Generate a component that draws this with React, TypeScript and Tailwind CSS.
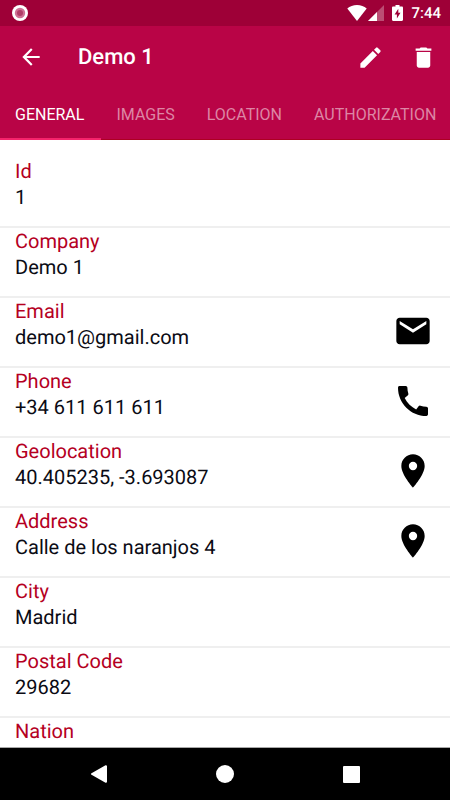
import React, { useState } from 'react'
import type { IconType } from 'react-icons'
import { MdArrowBack, MdCall, MdDelete, MdEdit, MdEmail, MdLocationOn } from 'react-icons/md'

type Field = {
  label: string;
  value?: string;
  icon?: IconType;
  action?: string;
  href?: string;
}

const tabs = ['GENERAL', 'IMAGES', 'LOCATION', 'AUTHORIZATION'];

const fields: Field[] = [
  { label: 'Id', value: '1' },
  { label: 'Company', value: 'Demo 1' },
  { label: 'Email', value: 'demo1@gmail.com', icon: MdEmail, action: 'Send email', href: 'mailto:demo1@gmail.com' },
  { label: 'Phone', value: '+34 611 611 611', icon: MdCall, action: 'Call', href: 'tel:+34611611611' },
  { label: 'Geolocation', value: '40.405235, -3.693087', icon: MdLocationOn, action: 'Open coordinates', href: 'geo:40.405235,-3.693087' },
  { label: 'Address', value: 'Calle de los naranjos 4', icon: MdLocationOn, action: 'Open address', href: 'geo:0,0?q=Calle+de+los+naranjos+4' },
  { label: 'City', value: 'Madrid' },
  { label: 'Postal Code', value: '29682' },
  { label: 'Nation' },
];

function StatusBar() {
  return (
    <div className="flex h-[26px] shrink-0 items-center bg-[#9e0037] pl-3 pr-[9px] text-white">
      <svg className="size-4" viewBox="0 0 16 16">
        <circle cx="8" cy="8" r="8" fill="#fff" />
        <circle cx="8" cy="8" r="5.2" fill="#cf7095" />
        <circle cx="8" cy="8" r="3" fill="#b03d68" />
      </svg>
      <div className="ml-auto flex items-center">
        {/* wifi */}
        <svg className="h-4 w-5" viewBox="0 0 20 16" fill="#fff">
          <path d="M10 16 0.3 3.6C2.8 1.3 6.2 0 10 0s7.2 1.3 9.7 3.6z" />
        </svg>
        {/* mobile signal */}
        <svg className="ml-px h-4 w-4" viewBox="0 0 16 16" fill="#fff">
          <path d="M0 16 16 0v16z" opacity="0.3" />
          <path d="M0 16 9 7v9z" />
        </svg>
        {/* charging battery */}
        <svg className="ml-2 h-4 w-[11px]" viewBox="0 0 11 16">
          <path d="M3.5 0h4v1.5h2.3c.7 0 1.2.5 1.2 1.2v12.1c0 .7-.5 1.2-1.2 1.2H1.2C.5 16 0 15.5 0 14.8V2.7c0-.7.5-1.2 1.2-1.2h2.3z" fill="#fff" />
          <path d="M6.3 3.8 2.6 9.4h2.3v4l3.6-5.7H6.3z" fill="#9e0037" />
        </svg>
        <span className="ml-2 text-[15px] leading-5 font-medium">7:44</span>
      </div>
    </div>
  )
}

function FieldRow({ field }: { field: Field }) {
  const Icon = field.icon;

  return (
    <div className="flex h-[70px] items-start justify-between border-b-2 border-[#efefef] pl-[15px] pr-[17px]">
      <dl className="text-[20px] leading-[26px]">
        <dt className="text-[#b5001f]">{field.label}</dt>
        <dd className="text-[#0b0b14]">{field.value}</dd>
      </dl>
      {Icon && (
        <a href={field.href} aria-label={field.action} className="mt-[13px] text-black">
          <Icon size={40} />
        </a>
      )}
    </div>
  )
}

function NavigationBar() {
  return (
    <nav className="grid h-[53px] shrink-0 grid-cols-3 items-center justify-items-center border-t border-[#a8a8a8] bg-black px-9">
      <button aria-label="Back">
        <svg className="size-[18px]" viewBox="0 0 18 18">
          <path d="M2 9 16 1.2v15.6z" fill="#fff" stroke="#fff" strokeWidth="2" strokeLinejoin="round" />
        </svg>
      </button>
      <button aria-label="Home" className="size-[18px] rounded-full bg-white" />
      <button aria-label="Recent apps" className="size-[17px] rounded-[1px] bg-white" />
    </nav>
  )
}

export default function App() {
  const [active, setActive] = useState('GENERAL');

  return (
    <div className="flex h-screen flex-col overflow-hidden bg-white font-[Roboto,sans-serif] [text-rendering:geometricPrecision]">
      <StatusBar />

      <header className="shrink-0 bg-[#b90446] text-white">
        <div className="flex h-[62px] items-center pl-[18px] pr-[13px]">
          <button aria-label="Go back">
            <MdArrowBack size={26} />
          </button>
          <h1 className="ml-[34px] pt-0.5 text-[22px] leading-7 font-medium">Demo 1</h1>
          <button aria-label="Edit" className="ml-auto">
            <MdEdit size={27} />
          </button>
          <button aria-label="Delete" className="ml-[26px]">
            <MdDelete size={27} />
          </button>
        </div>

        <div role="tablist" className="flex h-[52px] overflow-hidden shadow-[inset_0_-1px_0_#ad0022]">
          {tabs.map((tab) => (
            <button
              key={tab}
              role="tab"
              aria-selected={tab === active}
              onClick={() => setActive(tab)}
              className={`shrink-0 border-b-2 pt-1 pr-[17px] pl-[15px] text-[16px] leading-5 ${
                tab === active ? 'border-[#f5246b] text-white' : 'border-transparent text-[#dd86a5]'
              }`}
            >
              {tab}
            </button>
          ))}
        </div>
      </header>

      <main className="min-h-0 flex-1 overflow-hidden pt-[18px]">
        {fields.map((field) => (
          <FieldRow key={field.label} field={field} />
        ))}
      </main>

      <NavigationBar />
    </div>
  )
}
